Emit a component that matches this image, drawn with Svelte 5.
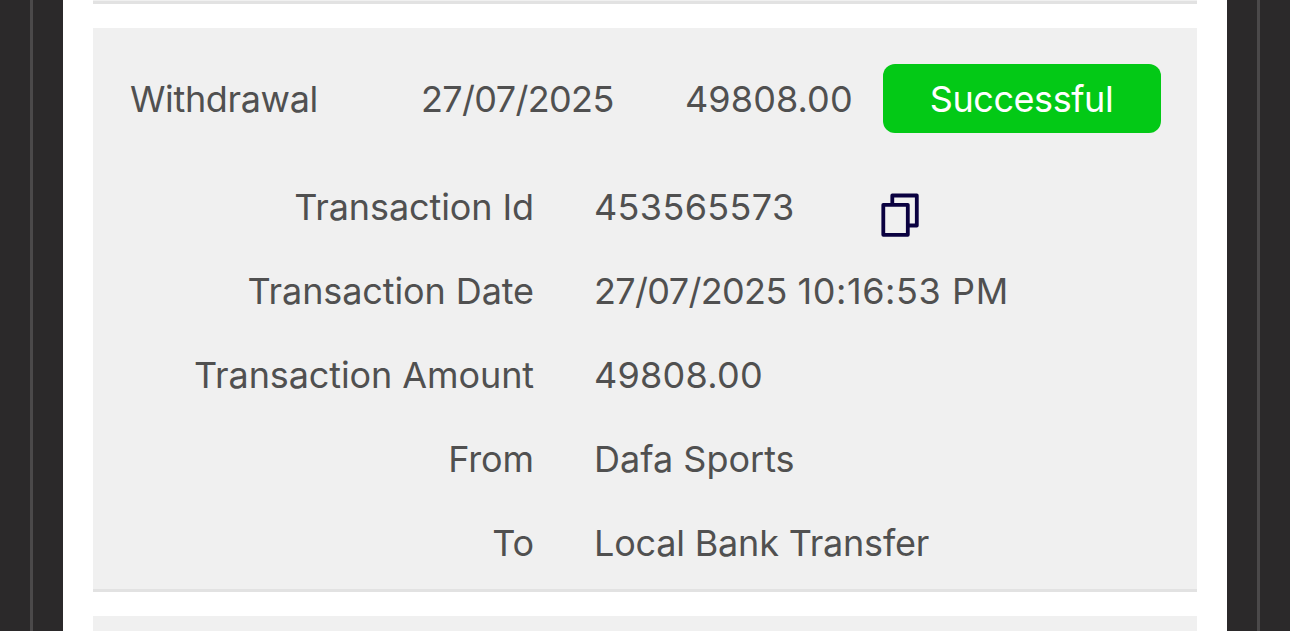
<script lang="ts">
  type Detail = {
    label: string;
    value: string;
    kind: string;
    time?: string;
    copyable?: boolean;
  };

  const details: Detail[] = [
    { label: "Transaction Id", value: "453565573", kind: "id", copyable: true },
    { label: "Transaction Date", value: "27/07/2025", time: "10:16:53 PM", kind: "datetime" },
    { label: "Transaction Amount", value: "49808.00", kind: "total" },
    { label: "From", value: "Dafa Sports", kind: "from" },
    { label: "To", value: "Local Bank Transfer", kind: "to" },
  ];

  function copy(text: string) {
    navigator.clipboard?.writeText(text);
  }
</script>

<div class="page">
  <div class="rail"></div>

  <main>
    <div class="card previous"></div>

    <section class="card">
      <div class="summary">
        <span class="type">Withdrawal</span>
        <span class="date">27/07/2025</span>
        <span class="amount">49808.00</span>
        <span class="status">Successful</span>
      </div>

      <dl>
        {#each details as { label, value, kind, time, copyable }}
          <div class="row {kind}">
            <dt>{label}</dt>
            <dd>
              {#if time}
                <div class="value"><span class="date">{value}</span> {time}</div>
              {:else}
                <div class="value">{value}</div>
              {/if}
              {#if copyable}
                <button aria-label="Copy" onclick={() => copy(value)}>
                  <svg viewBox="0 0 40 46">
                    <path d="M12.3 13V4.5h24.5v30H28" />
                    <rect x="3.3" y="13.8" width="24.5" height="30" />
                  </svg>
                </button>
              {/if}
            </dd>
          </div>
        {/each}
      </dl>
    </section>

    <div class="card next"></div>
  </main>

  <div class="rail"></div>
</div>

<style>
  .page {
    display: grid;
    grid-template-columns: 63px 1fr 63px;
    height: 631px;
    overflow: hidden;
    background: #fff;
    color: #505050;
    font-family: Inter, "Liberation Sans", sans-serif;
    font-size: 36px;
    line-height: 44px;
    white-space: nowrap;
  }

  .rail {
    background: linear-gradient(#4b494a, #4b494a) 30px 0 / 3px 100% no-repeat #2b292a;
  }

  main {
    display: flex;
    flex-direction: column;
    gap: 24px;
    padding: 0 30px;
  }

  .card {
    box-sizing: border-box;
    flex: none;
    height: 564px;
    background: #f0f0f0;
    border-bottom: 3px solid #e2e2e2;
  }

  .previous {
    height: 4px;
  }

  .next {
    height: 40px;
  }

  .summary {
    display: grid;
    grid-template-columns: 291px 264px 198px 278px;
    align-items: center;
    padding: 36px 36px 0 37px;
    height: 69px;
  }

  .type {
    letter-spacing: -0.35px;
  }

  .date {
    letter-spacing: -0.65px;
  }

  .amount {
    letter-spacing: 0.1px;
  }

  .status {
    box-sizing: border-box;
    height: 69px;
    padding: 2px 1px 0 0;
    border-radius: 12px;
    background: #03c916;
    color: #fff;
    line-height: 67px;
    letter-spacing: -0.45px;
    text-align: center;
  }

  dl {
    margin: 32px 0 0;
  }

  .row {
    display: grid;
    grid-template-columns: 441px 1fr;
    column-gap: 60px;
    align-items: center;
    height: 84px;
  }

  dt {
    letter-spacing: -0.1px;
    text-align: right;
  }

  dd {
    display: flex;
    align-items: center;
    margin: 0;
  }

  .value {
    width: 286px;
  }

  .id .value {
    letter-spacing: 0.35px;
  }

  .datetime .value {
    letter-spacing: 0.6px;
  }

  .total .value {
    letter-spacing: 0.25px;
  }

  .from .value {
    letter-spacing: 0;
  }

  .to .value {
    letter-spacing: -0.2px;
  }

  button {
    display: flex;
    margin: 13px 0 0;
    padding: 0;
    border: 0;
    background: none;
    cursor: pointer;
  }

  svg {
    width: 40px;
    height: 46px;
    fill: none;
    stroke: #0a0140;
    stroke-width: 3.8;
    stroke-linejoin: round;
  }
</style>
